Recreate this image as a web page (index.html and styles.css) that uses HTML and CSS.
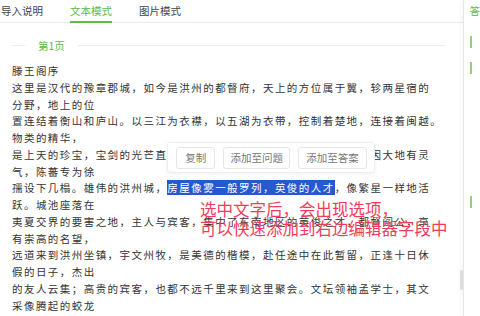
FILE: index.html
```html
<!DOCTYPE html>
<html lang="zh-CN">
<head>
  <meta charset="UTF-8" />
  <meta name="viewport" content="width=device-width, initial-scale=1.0"/>
  <title>文本模式</title>
  <link rel="stylesheet" href="styles.css">
</head>
<body>
<div class="app">
  <div class="main">
    <!-- 顶部标签 -->
    <div class="tabs">
      <div class="tab">导入说明</div>
      <div class="tab active">文本模式</div>
      <div class="tab">图片模式</div>
    </div>

    <div class="content">
      <div class="page-divider"><span>第1页</span></div>

      <div class="text">
        <p>滕王阁序</p>
        <p>这里是汉代的豫章郡城，如今是洪州的都督府，天上的方位属于翼，轸两星宿的</p>
        <p>分野，地上的位</p>
        <p>置连结着衡山和庐山。以三江为衣襟，以五湖为衣带，控制着楚地，连接着闽越。</p>
        <p>物类的精华，</p>
        <p>是上天的珍宝，宝剑的光芒直射牛、斗二星之间；人中的豪杰出现，因大地有灵</p>
        <p>气，陈蕃专为徐</p>
        <p>孺设下几榻。雄伟的洪州城，<span class="selected">房屋像雾一般罗列，英俊的人才</span>，像繁星一样地活</p>
        <p>跃。城池座落在</p>
        <p>夷夏交界的要害之地，主人与宾客，集中了东南地区的英俊之才，都督阎公，享</p>
        <p>有崇高的名望，</p>
        <p>远道来到洪州坐镇，宇文州牧，是美德的楷模，赴任途中在此暂留，正逢十日休</p>
        <p>假的日子，杰出</p>
        <p>的友人云集；高贵的宾客，也都不远千里来到这里聚会。文坛领袖孟学士，其文</p>
        <p>采像腾起的蛟龙</p>
      </div>

      <!-- 选中文字后的浮动菜单 -->
      <div class="popup">
        <button>复制</button>
        <button>添加至问题</button>
        <button>添加至答案</button>
      </div>

      <!-- 说明文字 -->
      <div class="note">选中文字后，会出现选项，<br>可以快速添加到右边编辑器字段中</div>

      <div class="scroll-thumb"></div>
    </div>
  </div>

  <div class="side">
    <div class="side-title">答</div>
    <div class="mark"></div>
    <div class="mark"></div>
    <div class="mark mark-low"></div>
  </div>
</div>
</body>
</html>
```

FILE: styles.css
```css
* {
  margin: 0;
  padding: 0;
  box-sizing: border-box;
}

body {
  font-family: "Noto Sans CJK SC", "Noto Sans", sans-serif;
  background: #fff;
  width: 480px;
  height: 316px;
  overflow: hidden;
}

.app {
  display: flex;
  height: 316px;
}

.main {
  width: 466px;
  display: flex;
  flex-direction: column;
}

.tabs {
  display: flex;
  gap: 27px;
  height: 23px;
  padding-left: 1px;
  border-bottom: 1px solid #ececec;
}

.tab {
  font-size: 10.5px;
  line-height: 22px;
  color: #444;
}

.tab.active {
  color: #5fb94b;
  border-bottom: 2px solid #5fb94b;
  height: 23px;
}

.content {
  position: relative;
  flex: 1;
}

.page-divider {
  display: flex;
  align-items: center;
  gap: 13px;
  margin: 12px 18px 0 12px;
  height: 20px;
}

.page-divider::before,
.page-divider::after {
  content: '';
  height: 1px;
  background: #ececec;
}

.page-divider::before { width: 13px; }
.page-divider::after { flex: 1; }

.page-divider span {
  font-size: 10.5px;
  color: #5fb94b;
}

.text {
  padding: 8px 0 0 12px;
}

.text p {
  font-size: 10.5px;
  line-height: 16.75px;
  letter-spacing: 1.45px;
  color: #333;
  white-space: nowrap;
}

.selected {
  background: #2659cf;
  color: #fff;
}

.popup {
  position: absolute;
  left: 167px;
  top: 119px;
  width: 208px;
  height: 31px;
  display: flex;
  align-items: center;
  gap: 8px;
  padding: 0 7px 0 8px;
  background: #fff;
  border: 1px solid #eee;
  border-radius: 3px;
  box-shadow: 0 1px 4px rgba(0,0,0,0.06);
}

.popup button {
  height: 22px;
  padding: 0;
  font-family: inherit;
  font-size: 10.5px;
  color: #777;
  white-space: nowrap;
  background: #fff;
  border: 1px solid #e6e6e6;
  border-radius: 3px;
}

.popup button:nth-child(1) { width: 40px; }
.popup button:nth-child(2) { width: 68px; }
.popup button:nth-child(3) { width: 70px; }

.note {
  position: absolute;
  left: 200px;
  top: 177px;
  font-size: 16.5px;
  line-height: 19px;
  color: #f23c5c;
  white-space: nowrap;
}

.scroll-thumb {
  position: absolute;
  right: 0;
  top: 247px;
  width: 3px;
  height: 20px;
  background: #e2e2e2;
  border-radius: 2px;
}

.side {
  flex: 1;
  position: relative;
  border-left: 1px solid #e6e6e6;
  box-shadow: -3px 0 4px rgba(0,0,0,0.03);
  padding-left: 6px;
}

.side-title {
  font-size: 10.5px;
  line-height: 22px;
  color: #5fb94b;
  white-space: nowrap;
}

.mark {
  width: 2px;
  height: 12px;
  background: #8fd27c;
  margin-top: 14px;
}

.mark-low { margin-top: 122px; }
```
